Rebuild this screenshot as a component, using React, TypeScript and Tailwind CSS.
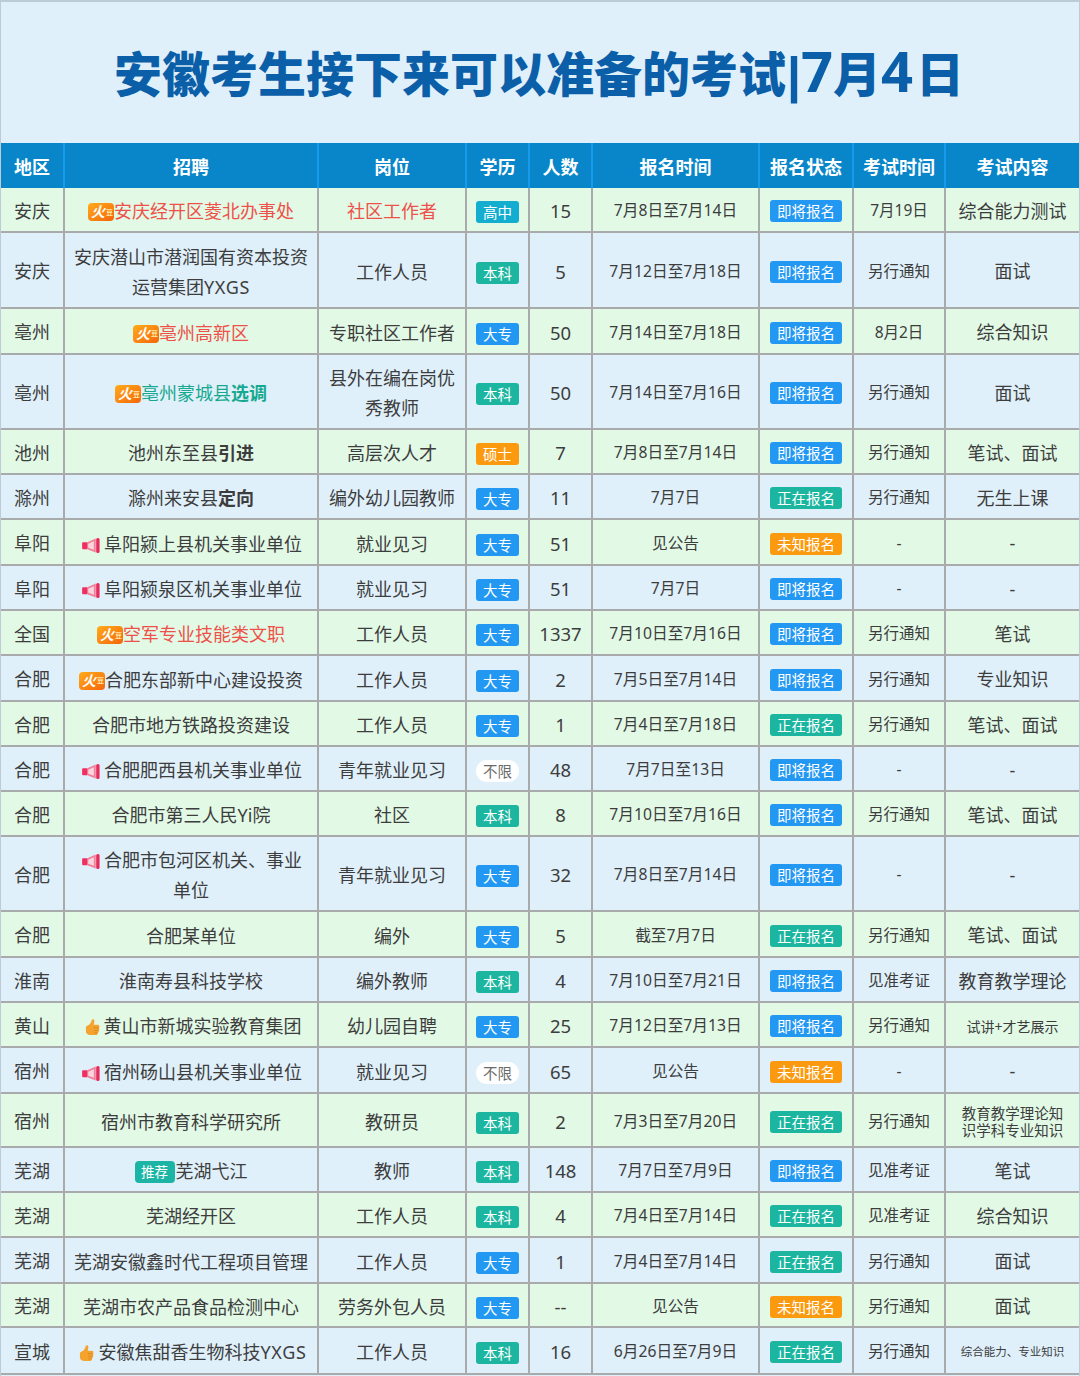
import type { ReactNode } from "react";

const fontStack = "font-['Noto_Sans','Noto_Sans_CJK_SC',sans-serif]";

function Fire() {
  return (
    <span className="relative inline-flex h-[18px] w-[26px] items-center rounded-[4px] bg-gradient-to-br from-[#ffab1a] to-[#f4640c] pl-[3px] align-[1px] text-[14px] leading-none font-bold text-white italic">
      火
      <span className="ml-[1px] text-[7px] not-italic text-[#ffe9a8]">豆</span>
    </span>
  );
}

function Horn() {
  return (
    <svg viewBox="0 0 20 16" className="mr-[3px] ml-[2px] inline-block h-[15px] w-[19px] align-[-2px]">
      <rect x="0" y="4.5" width="6" height="7.5" rx="1" fill="#ee2f62" />
      <path d="M5.5 4.5 L14.5 0.5 V15.5 L5.5 12 Z" fill="#f47f9b" />
      <path d="M6.5 6 L12.5 3.5 V12.5 L6.5 10.5 Z" fill="#fcd5df" />
      <rect x="15" y="0" width="3.6" height="16" rx="1.6" fill="#e82a5a" />
    </svg>
  );
}

function Thumb() {
  return (
    <svg viewBox="0 0 16 18" className="mr-[4px] ml-[4px] inline-block h-[18px] w-[15px] align-[-3px]">
      <path
        d="M1 9.5 C1 8.4 1.8 7.6 3 7.4 C5 6.6 6.6 4.4 7.2 1.6 C7.5 0.4 9.6 0.4 9.9 2 C10.2 3.6 9.6 5.4 9.2 6.6 L13.4 6.6 C15.5 6.6 15.9 8.6 14.9 9.6 C15.7 10.6 15.4 12 14.6 12.5 C15 13.6 14.6 14.8 13.7 15.2 C13.9 16.4 13.1 17.4 11.9 17.4 L6 17.4 C3 17.4 1 16.2 1 14 Z"
        fill="#f3a32e"
      />
      <path d="M9.5 9.6 H14.6 M9.8 12.5 H14.4 M9.9 15.2 H13.6" stroke="#d97c12" strokeWidth="0.7" />
    </svg>
  );
}

function Tag() {
  return (
    <span className="mr-[1px] inline-block h-[22px] w-[40px] rounded-[4px] bg-[#1cb5a5] align-[1px] text-center text-[13.5px] leading-[22px] text-white">
      推荐
    </span>
  );
}

const Red = ({ children }: { children: ReactNode }) => <span className="text-[#ee5149]">{children}</span>;
const Teal = ({ children }: { children: ReactNode }) => <span className="text-[#17a98f]">{children}</span>;
const B = ({ children }: { children: ReactNode }) => <b className="font-bold">{children}</b>;
const Yxgs = () => <span className="tracking-[0.7px]">YXGS</span>;

const eduColors: Record<string, string> = {
  高中: "bg-[#13add0] text-white",
  本科: "bg-[#1cb5a0] text-white",
  大专: "bg-[#2398f3] text-white",
  硕士: "bg-[#fb9a0f] text-white",
  不限: "bg-white text-[#6b6b6b] rounded-full",
};

const statusColors: Record<string, string> = {
  即将报名: "bg-[#2398f3]",
  正在报名: "bg-[#1cb5a0]",
  未知报名: "bg-[#fb9a0f]",
};

type Row = {
  h: string;
  area: string;
  job: ReactNode;
  post: ReactNode;
  edu: string;
  num: string;
  date: string;
  status: string;
  exam: string;
  content: ReactNode;
};

const rows: Row[] = [
  { h: "h-[45px]", area: "安庆", job: <><Fire /><Red>安庆经开区菱北办事处</Red></>, post: <Red>社区工作者</Red>, edu: "高中", num: "15", date: "7月8日至7月14日", status: "即将报名", exam: "7月19日", content: "综合能力测试" },
  { h: "h-[76px]", area: "安庆", job: <>安庆潜山市潜润国有资本投资<br />运营集团<Yxgs /></>, post: "工作人员", edu: "本科", num: "5", date: "7月12日至7月18日", status: "即将报名", exam: "另行通知", content: "面试" },
  { h: "h-[46px]", area: "亳州", job: <><Fire /><Red>亳州高新区</Red></>, post: "专职社区工作者", edu: "大专", num: "50", date: "7月14日至7月18日", status: "即将报名", exam: "8月2日", content: "综合知识" },
  { h: "h-[75px]", area: "亳州", job: <><Fire /><Teal>亳州蒙城县<B>选调</B></Teal></>, post: "县外在编在岗优秀教师", edu: "本科", num: "50", date: "7月14日至7月16日", status: "即将报名", exam: "另行通知", content: "面试" },
  { h: "h-[45px]", area: "池州", job: <>池州东至县<B>引进</B></>, post: "高层次人才", edu: "硕士", num: "7", date: "7月8日至7月14日", status: "即将报名", exam: "另行通知", content: "笔试、面试" },
  { h: "h-[45px]", area: "滁州", job: <>滁州来安县<B>定向</B></>, post: "编外幼儿园教师", edu: "大专", num: "11", date: "7月7日", status: "正在报名", exam: "另行通知", content: "无生上课" },
  { h: "h-[46px]", area: "阜阳", job: <><Horn />阜阳颍上县机关事业单位</>, post: "就业见习", edu: "大专", num: "51", date: "见公告", status: "未知报名", exam: "-", content: "-" },
  { h: "h-[45px]", area: "阜阳", job: <><Horn />阜阳颍泉区机关事业单位</>, post: "就业见习", edu: "大专", num: "51", date: "7月7日", status: "即将报名", exam: "-", content: "-" },
  { h: "h-[45px]", area: "全国", job: <><Fire /><Red>空军专业技能类文职</Red></>, post: "工作人员", edu: "大专", num: "1337", date: "7月10日至7月16日", status: "即将报名", exam: "另行通知", content: "笔试" },
  { h: "h-[46px]", area: "合肥", job: <><Fire />合肥东部新中心建设投资</>, post: "工作人员", edu: "大专", num: "2", date: "7月5日至7月14日", status: "即将报名", exam: "另行通知", content: "专业知识" },
  { h: "h-[45px]", area: "合肥", job: "合肥市地方铁路投资建设", post: "工作人员", edu: "大专", num: "1", date: "7月4日至7月18日", status: "正在报名", exam: "另行通知", content: "笔试、面试" },
  { h: "h-[45px]", area: "合肥", job: <><Horn />合肥肥西县机关事业单位</>, post: "青年就业见习", edu: "不限", num: "48", date: "7月7日至13日", status: "即将报名", exam: "-", content: "-" },
  { h: "h-[45px]", area: "合肥", job: "合肥市第三人民Yi院", post: "社区", edu: "本科", num: "8", date: "7月10日至7月16日", status: "即将报名", exam: "另行通知", content: "笔试、面试" },
  { h: "h-[75px]", area: "合肥", job: <><Horn />合肥市包河区机关、事业<br />单位</>, post: "青年就业见习", edu: "大专", num: "32", date: "7月8日至7月14日", status: "即将报名", exam: "-", content: "-" },
  { h: "h-[46px]", area: "合肥", job: "合肥某单位", post: "编外", edu: "大专", num: "5", date: "截至7月7日", status: "正在报名", exam: "另行通知", content: "笔试、面试" },
  { h: "h-[45px]", area: "淮南", job: "淮南寿县科技学校", post: "编外教师", edu: "本科", num: "4", date: "7月10日至7月21日", status: "即将报名", exam: "见准考证", content: "教育教学理论" },
  { h: "h-[45px]", area: "黄山", job: <><Thumb />黄山市新城实验教育集团</>, post: "幼儿园自聘", edu: "大专", num: "25", date: "7月12日至7月13日", status: "即将报名", exam: "另行通知", content: <span className="text-[14px]">试讲+才艺展示</span> },
  { h: "h-[46px]", area: "宿州", job: <><Horn />宿州砀山县机关事业单位</>, post: "就业见习", edu: "不限", num: "65", date: "见公告", status: "未知报名", exam: "-", content: "-" },
  { h: "h-[54px]", area: "宿州", job: "宿州市教育科学研究所", post: "教研员", edu: "本科", num: "2", date: "7月3日至7月20日", status: "正在报名", exam: "另行通知", content: <span className="block text-[14.5px] leading-[17px]">教育教学理论知<br />识学科专业知识</span> },
  { h: "h-[45px]", area: "芜湖", job: <><Tag />芜湖弋江</>, post: "教师", edu: "本科", num: "148", date: "7月7日至7月9日", status: "即将报名", exam: "见准考证", content: "笔试" },
  { h: "h-[45px]", area: "芜湖", job: "芜湖经开区", post: "工作人员", edu: "本科", num: "4", date: "7月4日至7月14日", status: "正在报名", exam: "见准考证", content: "综合知识" },
  { h: "h-[46px]", area: "芜湖", job: "芜湖安徽鑫时代工程项目管理", post: "工作人员", edu: "大专", num: "1", date: "7月4日至7月14日", status: "正在报名", exam: "另行通知", content: "面试" },
  { h: "h-[44px]", area: "芜湖", job: "芜湖市农产品食品检测中心", post: "劳务外包人员", edu: "大专", num: "--", date: "见公告", status: "未知报名", exam: "另行通知", content: "面试" },
  { h: "h-[47px]", area: "宣城", job: <><Thumb />安徽焦甜香生物科技<Yxgs /></>, post: "工作人员", edu: "本科", num: "16", date: "6月26日至7月9日", status: "正在报名", exam: "另行通知", content: <span className="text-[11.5px]">综合能力、专业知识</span> },
];

const headers = ["地区", "招聘", "岗位", "学历", "人数", "报名时间", "报名状态", "考试时间", "考试内容"];
const cols = "grid grid-cols-[64px_254px_148px_63px_63px_167px_94px_92px_1fr]";
const cell = "flex items-center justify-center border-r-2 border-[#a9aaac] pt-[3px] text-center last:border-r-0";

export default function App() {
  return (
    <div className={`${fontStack} h-[1376px] w-[1080px] overflow-hidden border-x border-t-2 border-[#bccbd6] bg-[#dff0fb] text-[18px] text-[#3d3d3d]`}>
      <div className="flex h-[141px] items-center justify-center pr-[2px] pb-[4px]">
        <h1 className="text-[48px] leading-none font-black whitespace-nowrap text-[#0b5fa8]">
          安徽考生接下来可以准备的考试
          <span className="ml-[1px] font-['Liberation_Sans'] text-[50px] font-bold">|</span>
          <span className="text-[56px] font-bold">7</span>月<span className="text-[56px] font-bold">4</span>
          <span className="ml-[3px]">日</span>
        </h1>
      </div>

      <div className={`${cols} h-[45px] bg-[#0886c9] text-[18px] font-bold text-white`}>
        {headers.map((h) => (
          <div key={h} className="flex items-center justify-center border-r-2 border-[#169aea] pt-[3px] last:border-r-0">
            {h}
          </div>
        ))}
      </div>

      {rows.map((r, i) => (
        <div
          key={i}
          className={`${cols} ${r.h} border-b-2 border-[#a9aaac] ${i % 2 === 0 ? "bg-[#e2f9e6]" : "bg-[#dff0fb]"}`}
        >
          <div className={cell}>{r.area}</div>
          <div className={`${cell} px-[8px] leading-[30px]`}>
            <div>{r.job}</div>
          </div>
          <div className={`${cell} px-[10px] leading-[30px]`}>
            <div>{r.post}</div>
          </div>
          <div className={cell}>
            <span className={`mt-[2px] h-[22px] w-[43px] rounded-[3px] text-[14.5px] leading-[23px] ${eduColors[r.edu]}`}>{r.edu}</span>
          </div>
          <div className={`${cell} text-[18.5px]`}>{r.num}</div>
          <div className={`${cell} text-[15.7px]`}>{r.date}</div>
          <div className={cell}>
            <span className={`h-[22px] w-[72px] rounded-[3px] text-[14.5px] leading-[22px] text-white ${statusColors[r.status]}`}>{r.status}</span>
          </div>
          <div className={`${cell} text-[15.5px]`}>{r.exam}</div>
          <div className={cell}>{r.content}</div>
        </div>
      ))}
    </div>
  );
}
